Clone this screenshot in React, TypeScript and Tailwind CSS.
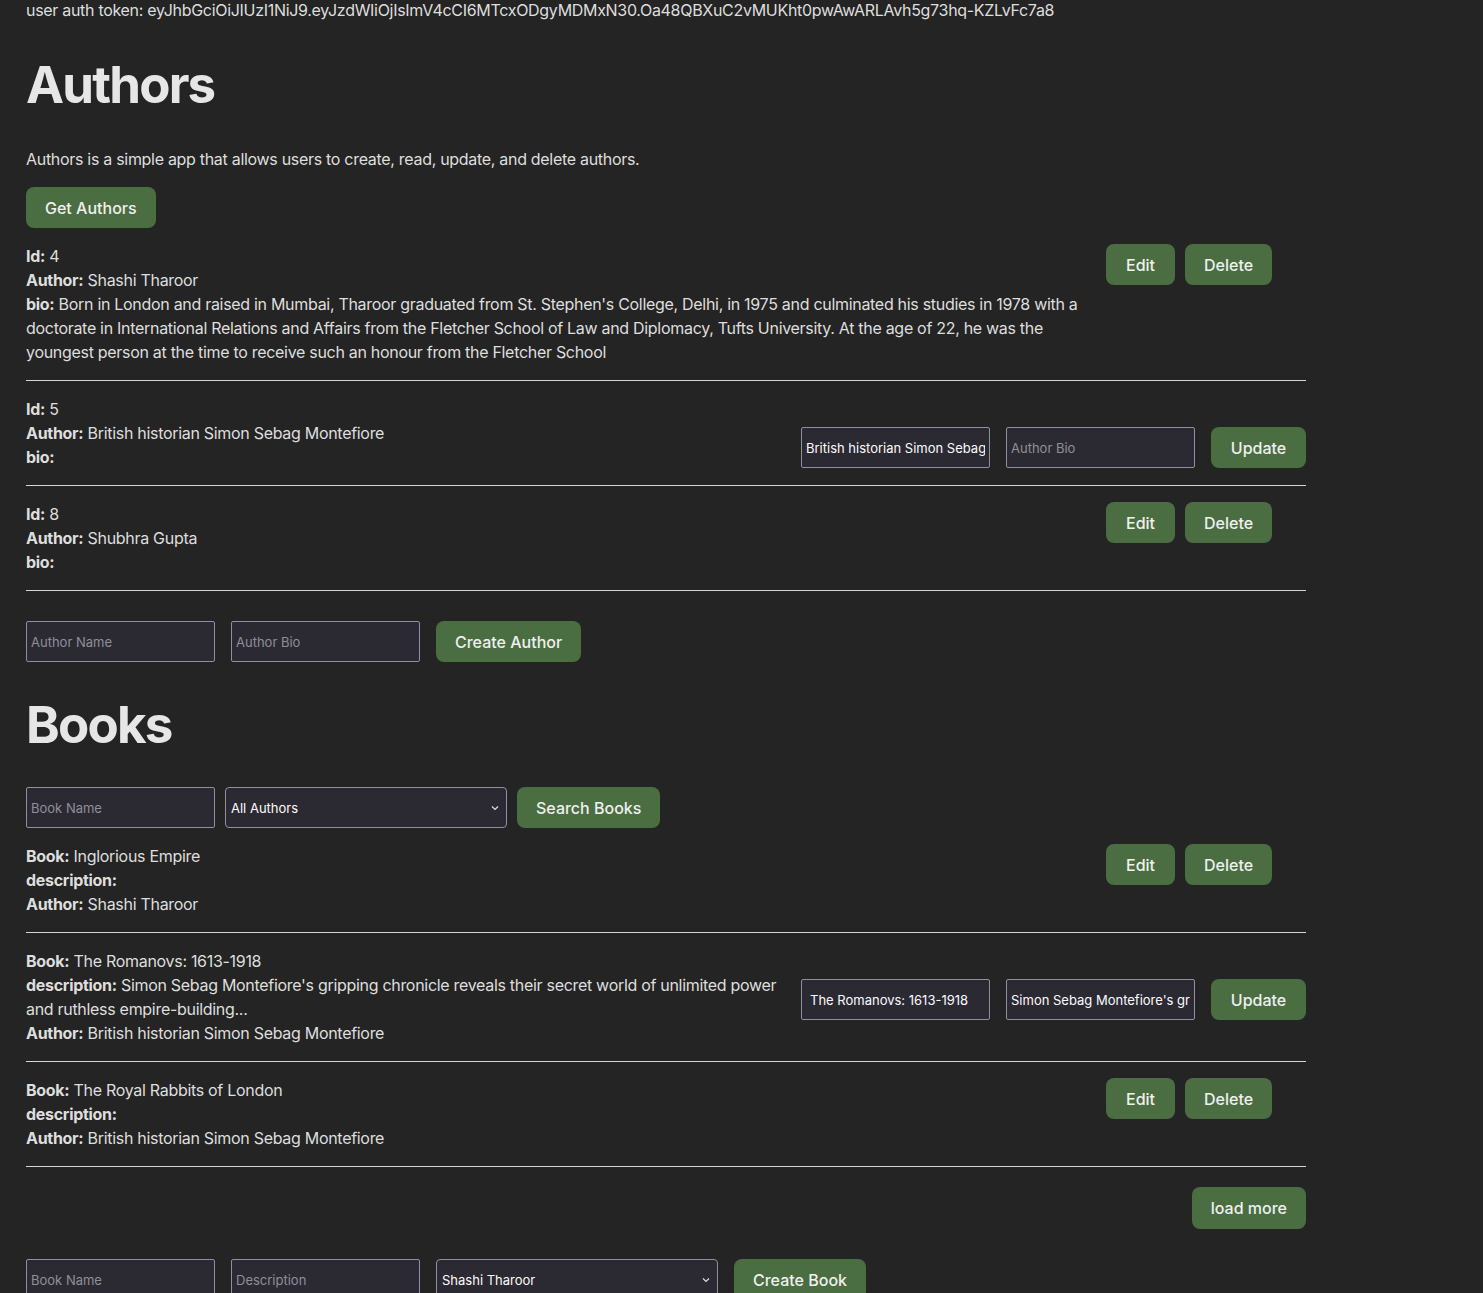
import React from "react";

const btn =
  "h-[41px] px-[19px] rounded-lg bg-[#4a6d41] text-[16px] font-medium text-[#f0f0f0] whitespace-nowrap tracking-normal";
const inp =
  "h-[41px] w-[189px] border border-[#8f8f9d] bg-[#2b2a33] px-[4px] text-[13px] text-[#fbfbfe] placeholder:text-[#8f8f96] outline-none rounded-[2px] tracking-normal";

function Chevron() {
  return (
    <svg
      className="pointer-events-none absolute right-[8px] top-1/2 -translate-y-1/2"
      width="8"
      height="6"
      viewBox="0 0 8 6"
      fill="none"
    >
      <path d="M1 1.5 L4 4.5 L7 1.5" stroke="#e0e0e0" strokeWidth="1.2" />
    </svg>
  );
}

function Select({ value, w }: { value: string; w: string }) {
  return (
    <div className={"relative h-[41px] " + w}>
      <div className="flex h-full w-full items-center rounded-[4px] border border-[#8f8f9d] bg-[#2b2a33] pl-[5px] text-[13px] tracking-normal text-[#fbfbfe]">
        {value}
      </div>
      <Chevron />
    </div>
  );
}

function EditDelete() {
  return (
    <div className="flex w-[200px] shrink-0 gap-[10px]">
      <button className={btn + " px-[20px]"}>Edit</button>
      <button className={btn}>Delete</button>
    </div>
  );
}

function UpdateForm({ a, b, bPlaceholder, aPad }: { a: string; b: string; bPlaceholder: string; aPad?: boolean }) {
  return (
    <div className="mt-[30px] flex shrink-0 gap-4">
      <input className={inp + (aPad ? " pl-[8px]" : "")} defaultValue={a} />
      <input className={inp} defaultValue={b} placeholder={bPlaceholder} />
      <button className={btn + " w-[95px] px-0"}>Update</button>
    </div>
  );
}

function Row({ children, right }: { children: React.ReactNode; right: React.ReactNode }) {
  return (
    <div className="flex gap-4 border-b border-[#d6d6d6] py-4">
      <div className="min-w-0 flex-1">{children}</div>
      {right}
    </div>
  );
}

function L({ k, v }: { k: string; v?: string }) {
  return (
    <div>
      <b className="font-bold">{k}:</b>
      {v ? " " + v : ""}
    </div>
  );
}

export default function App() {
  return (
    <div
      className="min-h-[1293px] bg-[#242424] pl-[26px] text-[16px] leading-[24px] tracking-[-0.3px] text-[#dedede]"
      style={{ fontFamily: "Inter, 'Liberation Sans', sans-serif" }}
    >
      <div className="w-[1280px]">
        <div className="leading-[21px]">
          user auth token:
          eyJhbGciOiJIUzI1NiJ9.eyJzdWIiOjIsImV4cCI6MTcxODgyMDMxN30.Oa48QBXuC2vMUKht0pwAwARLAvh5g73hq-KZLvFc7a8
        </div>

        <h1 className="mt-[36px] mb-[34px] text-[51px] font-bold leading-[56px] tracking-[-1.8px] text-[#e6e6e6]">Authors</h1>
        <p className="mb-4">Authors is a simple app that allows users to create, read, update, and delete authors.</p>
        <button className={btn}>Get Authors</button>

        <Row right={<EditDelete />}>
          <L k="Id" v="4" />
          <L k="Author" v="Shashi Tharoor" />
          <L
            k="bio"
            v="Born in London and raised in Mumbai, Tharoor graduated from St. Stephen's College, Delhi, in 1975 and culminated his studies in 1978 with a doctorate in International Relations and Affairs from the Fletcher School of Law and Diplomacy, Tufts University. At the age of 22, he was the youngest person at the time to receive such an honour from the Fletcher School"
          />
        </Row>
        <Row right={<UpdateForm a="British historian Simon Sebag Montefiore" b="" bPlaceholder="Author Bio" />}>
          <L k="Id" v="5" />
          <L k="Author" v="British historian Simon Sebag Montefiore" />
          <L k="bio" />
        </Row>
        <Row right={<EditDelete />}>
          <L k="Id" v="8" />
          <L k="Author" v="Shubhra Gupta" />
          <L k="bio" />
        </Row>

        <div className="mt-[30px] flex gap-4">
          <input className={inp} placeholder="Author Name" />
          <input className={inp} placeholder="Author Bio" />
          <button className={btn}>Create Author</button>
        </div>

        <h1 className="mt-[35px] mb-[34px] text-[51px] font-bold leading-[56px] tracking-[-1.8px] text-[#e6e6e6]">Books</h1>

        <div className="flex gap-[10px]">
          <input className={inp} placeholder="Book Name" />
          <Select value="All Authors" w="w-[282px]" />
          <button className={btn}>Search Books</button>
        </div>

        <Row right={<EditDelete />}>
          <L k="Book" v="Inglorious Empire" />
          <L k="description" />
          <L k="Author" v="Shashi Tharoor" />
        </Row>
        <Row
          right={
            <UpdateForm
              a="The Romanovs: 1613-1918"
              b="Simon Sebag Montefiore's gripping chronicle reveals their secret world of unlimited power and ruthless empire-building..."
              bPlaceholder="Description"
              aPad
            />
          }
        >
          <L k="Book" v="The Romanovs: 1613-1918" />
          <L
            k="description"
            v="Simon Sebag Montefiore's gripping chronicle reveals their secret world of unlimited power and ruthless empire-building..."
          />
          <L k="Author" v="British historian Simon Sebag Montefiore" />
        </Row>
        <Row right={<EditDelete />}>
          <L k="Book" v="The Royal Rabbits of London" />
          <L k="description" />
          <L k="Author" v="British historian Simon Sebag Montefiore" />
        </Row>

        <div className="mt-[20px] flex justify-end">
          <button className={btn + " h-[42px]"}>load more</button>
        </div>

        <div className="mt-[30px] flex gap-4 pb-4">
          <input className={inp} placeholder="Book Name" />
          <input className={inp} placeholder="Description" />
          <Select value="Shashi Tharoor" w="w-[282px]" />
          <button className={btn}>Create Book</button>
        </div>
      </div>
    </div>
  );
}
